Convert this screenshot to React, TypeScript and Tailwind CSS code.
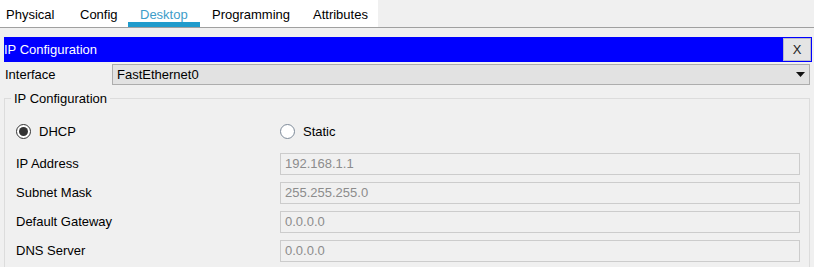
const tabs = [
  { label: 'Physical', w: 'w-[68px] pl-[6px]' },
  { label: 'Config', w: 'w-[60px] pl-[12px]' },
  { label: 'Desktop', w: 'w-[72px] pl-[12px]' },
  { label: 'Programming', w: 'w-[101px] pl-[12px]' },
  { label: 'Attributes', w: 'w-[77px] pl-[12px]' }
];

const fields = [
  { label: 'IP Address', value: '192.168.1.1' },
  { label: 'Subnet Mask', value: '255.255.255.0' },
  { label: 'Default Gateway', value: '0.0.0.0' },
  { label: 'DNS Server', value: '0.0.0.0' }
];

const Radio = ({ checked, label }: { checked?: boolean; label: string }) => (
  <div className="flex items-center gap-[8px]">
    <span
      className={
        checked
          ? 'flex h-[15px] w-[15px] items-center justify-center rounded-full border border-[#333333] bg-white'
          : 'flex h-[15px] w-[15px] items-center justify-center rounded-full border border-[#7d8a99] bg-white'
      }>
      {checked && <span className="h-[9px] w-[9px] rounded-full bg-[#333333]" />}
    </span>
    <span className="text-[13px] text-black">{label}</span>
  </div>
);

const App = () => {
  return (
    <div className="h-[267px] w-[814px] overflow-hidden bg-[#f0f0f0] font-['Liberation_Sans',Arial,sans-serif] text-[13px] text-black">
      {/* tab strip */}
      <div className="flex h-[28px] border-b border-[#a0a0a0]">
        <div className="flex w-[378px] bg-white">
          {tabs.map((t) => (
            <div
              key={t.label}
              className={`${t.w} flex h-full items-start pt-[5px] ${
                t.label === 'Desktop' ? 'border-b-[5px] border-[#1f9bcc] text-[#3d9dc9]' : 'text-black'
              }`}>
              {t.label}
            </div>
          ))}
        </div>
      </div>

      <div className="px-[4px] pt-[9px]">
        {/* title bar */}
        <div className="flex h-[25px] w-[808px] items-center justify-between bg-[#0000ff]">
          <span className="text-[13px] text-white">IP Configuration</span>
          <button className="mr-[1px] flex h-[23px] w-[28px] items-center justify-center border border-[#b9b9c9] bg-[#e4e4e4] text-[13px] text-[#222222]">
            X
          </button>
        </div>

        {/* interface */}
        <div className="mt-[2px] flex h-[21px] items-center">
          <span className="w-[108px] pl-[1px]">Interface</span>
          <div className="flex h-[21px] w-[698px] items-center justify-between border border-[#adadad] bg-[#e2e2e2] pl-[4px] pr-[4px]">
            <span>FastEthernet0</span>
            <svg width="9" height="5" viewBox="0 0 9 5">
              <path d="M0 0h9L4.5 5z" fill="#111" />
            </svg>
          </div>
        </div>

        {/* ip configuration group */}
        <fieldset className="mt-[4px] w-[806px] border border-[#dcdcdc] pb-[20px] pl-[11px] pr-[8px]">
          <legend className="-ml-[5px] px-[3px] text-[13px]">IP Configuration</legend>
          <div className="mt-[13px] flex h-[20px] items-center">
            <div className="w-[264px]">
              <Radio checked label="DHCP" />
            </div>
            <Radio label="Static" />
          </div>
          <div className="mt-[11px] flex flex-col gap-[7px]">
            {fields.map((f) => (
              <div key={f.label} className="flex h-[22px] items-center">
                <span className="w-[264px]">{f.label}</span>
                <div className="flex h-[22px] w-[520px] items-center border border-[#cccccc] bg-[#f0f0f0] pl-[4px] text-[#8c8c8c]">
                  {f.value}
                </div>
              </div>
            ))}
          </div>
        </fieldset>
      </div>
    </div>
  );
};

export default App;
